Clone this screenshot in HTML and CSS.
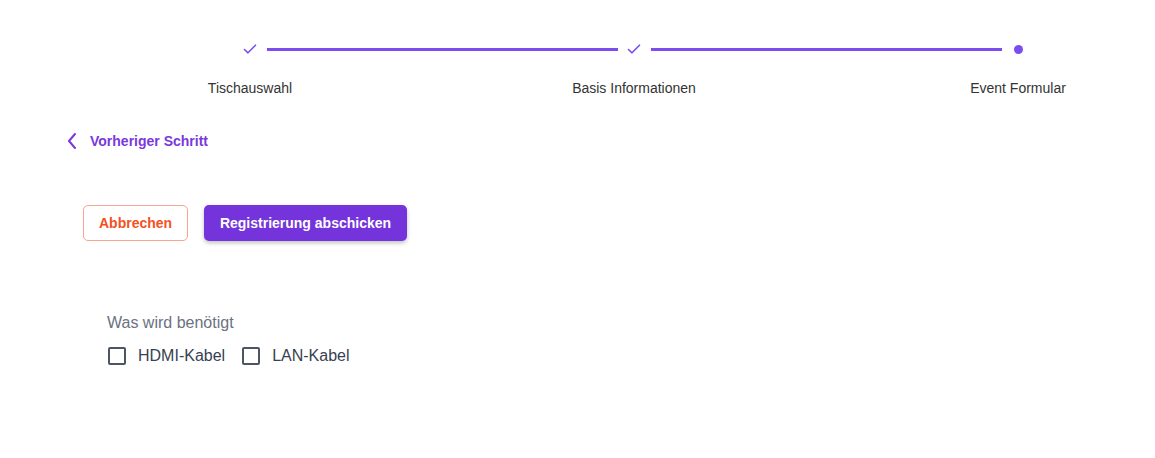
FILE: index.html
```html
<!DOCTYPE html>
<html lang="de">
<head>
<meta charset="utf-8">
<title>Event Formular</title>
<link rel="stylesheet" href="styles.css">
</head>
<body>
<div class="page">
  <div class="stepper">
    <div class="step-track">
      <span class="step-icon">
        <svg width="18" height="18" viewBox="0 0 18 18"><polyline points="3.5,9.5 7,12.8 14.5,5.2" fill="none" stroke="#7b4df0" stroke-width="1.6" stroke-linecap="round" stroke-linejoin="round"/></svg>
      </span>
      <span class="step-line"></span>
      <span class="step-icon">
        <svg width="18" height="18" viewBox="0 0 18 18"><polyline points="3.5,9.5 7,12.8 14.5,5.2" fill="none" stroke="#7b4df0" stroke-width="1.6" stroke-linecap="round" stroke-linejoin="round"/></svg>
      </span>
      <span class="step-line"></span>
      <span class="step-icon"><span class="step-dot"></span></span>
    </div>
    <div class="step-labels">
      <span class="step-label">Tischauswahl</span>
      <span class="step-label">Basis Informationen</span>
      <span class="step-label">Event Formular</span>
    </div>
  </div>

  <a class="back-link" href="#">
    <svg width="12" height="18" viewBox="0 0 12 18"><polyline points="9,2 3,9 9,16" fill="none" stroke="#7a38dc" stroke-width="2" stroke-linecap="round" stroke-linejoin="round"/></svg>
    <span>Vorheriger Schritt</span>
  </a>

  <div class="actions">
    <button class="btn btn-cancel">Abbrechen</button>
    <button class="btn btn-submit">Registrierung abschicken</button>
  </div>

  <div class="field">
    <div class="field-label">Was wird benötigt</div>
    <div class="options">
      <label class="option"><span class="box"></span>HDMI-Kabel</label>
      <label class="option"><span class="box"></span>LAN-Kabel</label>
    </div>
  </div>
</div>
</body>
</html>
```

FILE: styles.css
```css
html, body {
  margin: 0;
  padding: 0;
  background: #ffffff;
  font-family: "Liberation Sans", Arial, sans-serif;
}

.page {
  width: 1155px;
  height: 458px;
  overflow: hidden;
}

.stepper {
  padding-top: 40px;
}

.step-track {
  display: flex;
  align-items: center;
  margin-left: 241px;
  width: 786px;
  height: 18px;
}

.step-icon {
  width: 18px;
  height: 18px;
  display: flex;
  align-items: center;
  justify-content: center;
  flex: none;
}

.step-dot {
  width: 9px;
  height: 9px;
  border-radius: 50%;
  background: #7b4df0;
}

.step-line {
  flex: 1;
  height: 3px;
  margin: 1px 7px 0 8px;
  background: #7b4df0;
}

.step-labels {
  display: flex;
  justify-content: space-between;
  margin-left: 150px;
  width: 968px;
  margin-top: 22px;
}

.step-label {
  width: 200px;
  text-align: center;
  font-size: 14px;
  line-height: 16px;
  color: #333333;
}

.back-link {
  display: flex;
  align-items: center;
  gap: 12px;
  margin-left: 66px;
  margin-top: 36px;
  text-decoration: none;
  color: #7a38dc;
  font-weight: bold;
  font-size: 14px;
  width: max-content;
}

.actions {
  display: flex;
  gap: 16px;
  margin-left: 83px;
  margin-top: 55px;
}

.btn {
  height: 36px;
  border-radius: 5px;
  font-family: "Liberation Sans", Arial, sans-serif;
  font-weight: bold;
  font-size: 14px;
  padding: 0 15px;
  cursor: pointer;
}

.btn-cancel {
  width: 105px;
  background: #ffffff;
  color: #f4511e;
  border: 1px solid #f9a58f;
}

.btn-submit {
  width: 203px;
  background: #7433db;
  color: #ffffff;
  border: none;
  box-shadow: 0 2px 4px rgba(0, 0, 0, 0.25);
}

.field {
  margin-left: 107px;
  margin-top: 73px;
}

.field-label {
  font-size: 16px;
  line-height: 18px;
  color: #6b7280;
}

.options {
  display: flex;
  gap: 16px;
  margin-top: 15px;
}

.option {
  display: flex;
  align-items: center;
  gap: 12px;
  font-size: 16px;
  line-height: 18px;
  color: #374151;
}

.box {
  width: 14px;
  height: 14px;
  border: 2px solid #4b5563;
  border-radius: 2px;
  margin-left: 1px;
}
```
